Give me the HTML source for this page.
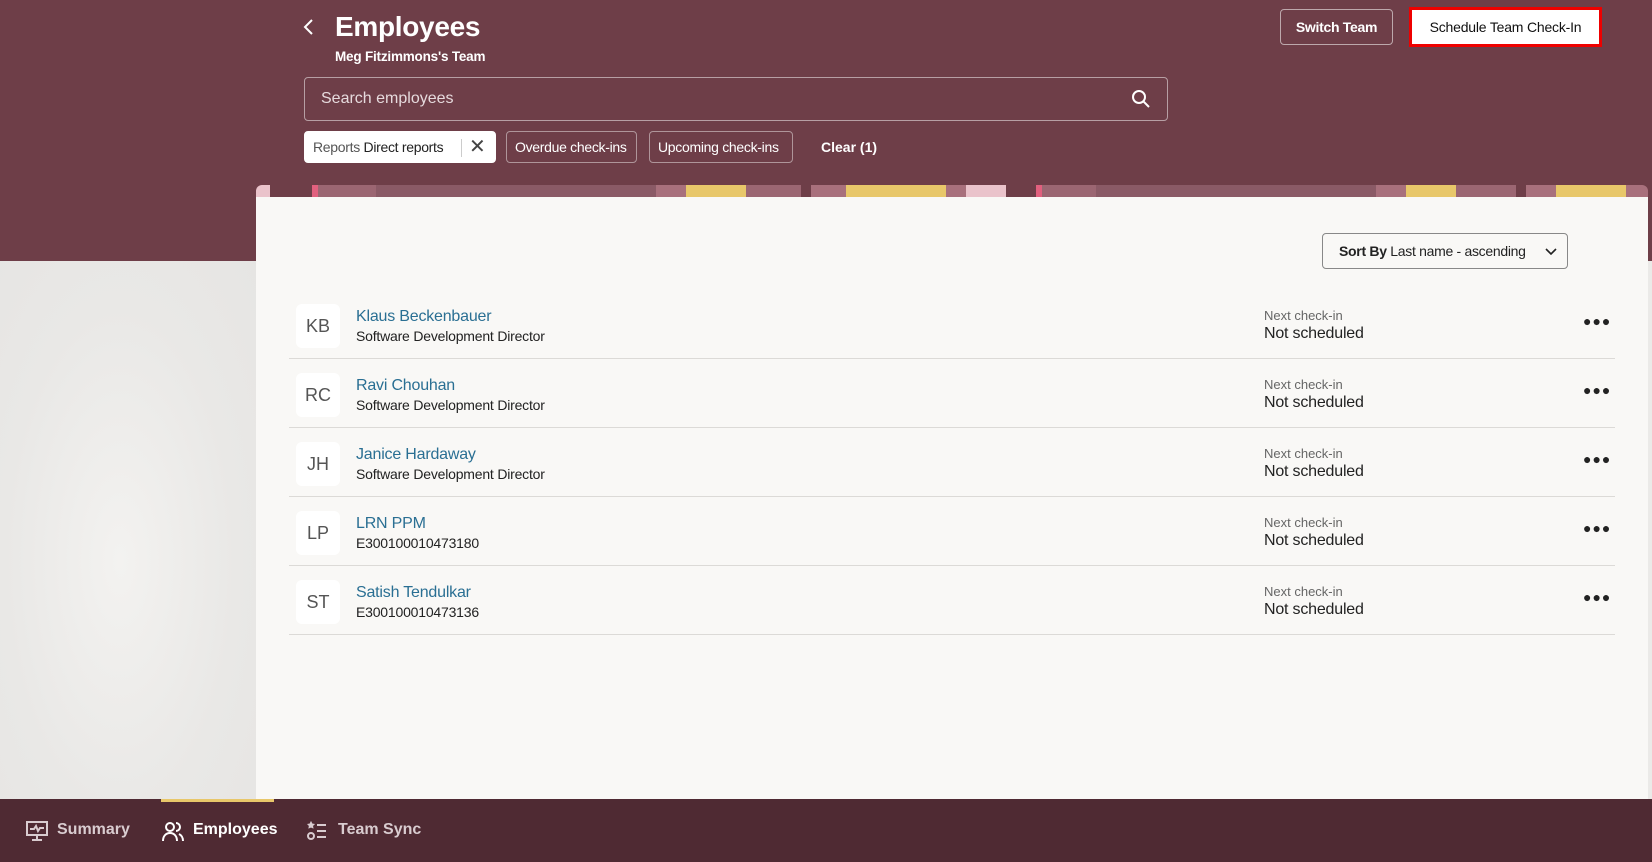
<!DOCTYPE html>
<html><head><meta charset="utf-8"><style>
*{box-sizing:border-box;margin:0;padding:0}
body{width:1652px;height:862px;overflow:hidden;font-family:"Liberation Sans",sans-serif;background:#ebeae8;position:relative}
.hdr{position:absolute;left:0;top:0;width:1652px;height:261px;background:#6e3e48}
.topo{position:absolute;left:0;top:261px;width:256px;height:538px;background:radial-gradient(ellipse at 120px 300px,#f3f2f0 0,#e9e8e6 60%,#e6e5e3 100%)}
.abs{position:absolute;white-space:nowrap}
.chip{position:absolute;top:131px;height:32px;border:1px solid rgba(255,255,255,.45);border-radius:4px;color:#fff;font-size:14px;line-height:30px;padding:0 8px;white-space:nowrap;letter-spacing:-.3px}
.card{position:absolute;left:256px;top:197px;width:1392px;height:602px;background:#f9f8f6}
.strip{position:absolute;left:256px;top:185px;width:1392px;height:12px;border-radius:6px 6px 0 0;background:linear-gradient(90deg,#eac3cb 0 14px,#6e3e48 14px 56px,#e1607e 56px 62px,#9b6672 62px 120px,#8a5a66 120px 400px,#a8707c 400px 430px,#e8c76a 430px 490px,#9b6672 490px 545px,#6e3e48 545px 555px,#a8707c 555px 590px,#e8c76a 590px 690px,#a8707c 690px 710px,#eac3cb 710px 750px,#6e3e48 750px 780px,#e1607e 780px 786px,#9b6672 786px 840px,#8a5a66 840px 1120px,#a8707c 1120px 1150px,#e8c76a 1150px 1200px,#9b6672 1200px 1260px,#6e3e48 1260px 1270px,#a8707c 1270px 1300px,#e8c76a 1300px 1370px,#a8707c 1370px)}
.row{position:absolute;left:289px;width:1326px;height:69px;border-bottom:1px solid #dcdad7}
.row div{white-space:nowrap}
.av{position:absolute;left:7px;top:14px;width:44px;height:44px;background:#fff;border-radius:6px;color:#555;font-size:18px;text-align:center;line-height:44px}
.nm{position:absolute;left:67px;top:18px;font-size:16px;color:#2a6f93;letter-spacing:-.2px}
.sub{position:absolute;left:67px;top:38px;font-size:14px;color:#222;letter-spacing:-.2px}
.nl{position:absolute;left:975px;top:18px;font-size:13px;color:#666}
.ns{position:absolute;left:975px;top:35px;font-size:16px;color:#222;letter-spacing:-.2px}
.dots{position:absolute;left:1294px;top:23px;font-size:14px;color:#222;letter-spacing:1px}
.nav{position:absolute;left:0;top:799px;width:1652px;height:63px;background:#4f2a33}
.ni{position:absolute;top:22px;font-size:16px;font-weight:bold;color:#d9ccd0;white-space:nowrap}
</style></head><body>
<div class="hdr"></div>
<div class="topo"></div>
<svg class="abs" style="left:302px;top:18px" width="14" height="18" viewBox="0 0 14 18"><path d="M10 2 L3 9 L10 16" stroke="#fff" stroke-width="2" fill="none"/></svg>
<div class="abs" style="left:335px;top:11px;font-size:28px;font-weight:bold;color:#fff;letter-spacing:-.3px">Employees</div>
<div class="abs" style="left:335px;top:49px;font-size:13.5px;font-weight:bold;color:#fff;letter-spacing:-.2px">Meg Fitzimmons's Team</div>
<div class="abs" style="left:304px;top:77px;width:864px;height:44px;border:1px solid rgba(255,255,255,.5);border-radius:4px;color:#e6dadd;font-size:16px;line-height:42px;padding-left:16px">Search employees</div>
<svg class="abs" style="left:1131px;top:89px" width="20" height="20" viewBox="0 0 20 20"><circle cx="8" cy="8" r="6" stroke="#fff" stroke-width="2" fill="none"/><path d="M12.5 12.5 L18 18" stroke="#fff" stroke-width="2"/></svg>
<div class="chip" style="left:304px;width:192px;background:#fff;border-color:#fff;color:#222"><span style="color:#555">Reports</span> Direct reports<span style="position:absolute;left:156px;top:7px;height:18px;border-left:1px solid #ccc"></span><span style="position:absolute;left:164px;top:0;font-size:20px;color:#444">✕</span></div>
<div class="chip" style="left:506px;width:131px">Overdue check-ins</div>
<div class="chip" style="left:649px;width:144px">Upcoming check-ins</div>
<div class="abs" style="left:821px;top:139px;font-size:14px;font-weight:bold;color:#fff">Clear (1)</div>
<div class="abs" style="left:1280px;top:9px;width:113px;height:36px;border:1px solid rgba(255,255,255,.55);border-radius:4px;color:#fff;font-size:14px;font-weight:bold;text-align:center;line-height:34px;letter-spacing:-.3px">Switch Team</div>
<div class="abs" style="left:1409px;top:7px;width:193px;height:40px;border:3px solid #e00;background:#fff;color:#111;font-size:14px;text-align:center;line-height:34px;letter-spacing:-.2px">Schedule Team Check-In</div>
<div class="strip"></div>
<div class="card"></div>
<div class="abs" style="left:1322px;top:233px;width:246px;height:36px;border:1px solid #888;border-radius:4px;font-size:14px;line-height:34px;padding-left:16px;color:#222;letter-spacing:-.3px"><b>Sort By</b> Last name - ascending<svg style="position:absolute;left:222px;top:14px" width="12" height="8" viewBox="0 0 12 8"><path d="M1 1 L6 6 L11 1" stroke="#222" stroke-width="1.6" fill="none"/></svg></div>
<div class="row" style="top:290px"><div class="av">KB</div><div class="nm">Klaus Beckenbauer</div><div class="sub">Software Development Director</div><div class="nl">Next check-in</div><div class="ns">Not scheduled</div><div class="dots">●●●</div></div>
<div class="row" style="top:359px"><div class="av">RC</div><div class="nm">Ravi Chouhan</div><div class="sub">Software Development Director</div><div class="nl">Next check-in</div><div class="ns">Not scheduled</div><div class="dots">●●●</div></div>
<div class="row" style="top:428px"><div class="av">JH</div><div class="nm">Janice Hardaway</div><div class="sub">Software Development Director</div><div class="nl">Next check-in</div><div class="ns">Not scheduled</div><div class="dots">●●●</div></div>
<div class="row" style="top:497px"><div class="av">LP</div><div class="nm">LRN PPM</div><div class="sub">E300100010473180</div><div class="nl">Next check-in</div><div class="ns">Not scheduled</div><div class="dots">●●●</div></div>
<div class="row" style="top:566px"><div class="av">ST</div><div class="nm">Satish Tendulkar</div><div class="sub">E300100010473136</div><div class="nl">Next check-in</div><div class="ns">Not scheduled</div><div class="dots">●●●</div></div>
<div class="nav">
<div class="abs" style="left:161px;top:0;width:113px;height:3px;background:#e8c76a"></div>
<svg class="abs" style="left:26px;top:21px" width="22" height="22" viewBox="0 0 22 22" fill="none" stroke="#d9ccd0" stroke-width="2"><rect x="1" y="2" width="20" height="13"/><path d="M4 9h4l2-3 2 5 2-3h4M11 15v4M6 20h10"/></svg>
<div class="ni" style="left:57px">Summary</div>
<svg class="abs" style="left:162px;top:21px" width="22" height="22" viewBox="0 0 22 22" fill="none" stroke="#fff" stroke-width="2"><circle cx="8" cy="7" r="4"/><path d="M1 21c0-5 3-8 7-8s7 3 7 8"/><path d="M14 3a4 4 0 0 1 0 8M17 14c2 1 4 3 4 7"/></svg>
<div class="ni" style="left:193px;color:#fff">Employees</div>
<svg class="abs" style="left:307px;top:22px" width="20" height="20" viewBox="0 0 20 20" fill="none" stroke="#d9ccd0" stroke-width="2"><path d="M4 1l1 2 2 .3-1.5 1.5.4 2L4 6 2 6.8l.4-2L1 3.3 3 3z" fill="#d9ccd0" stroke-width="1"/><circle cx="4" cy="15" r="3"/><path d="M10 4h9M10 10h9M10 16h9"/></svg>
<div class="ni" style="left:338px">Team Sync</div>
</div>
</body></html>
